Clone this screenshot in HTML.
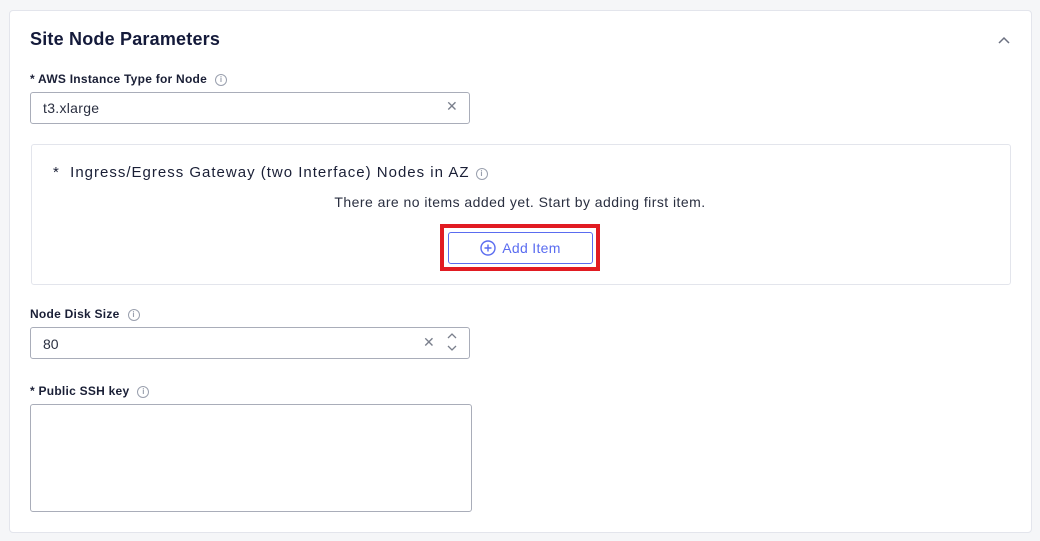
<!DOCTYPE html>
<html><head><style>
body{margin:0;width:1040px;height:541px;background:#f5f6f8;font-family:"Liberation Sans",sans-serif;position:relative;overflow:hidden}
.card{position:absolute;left:9px;top:10px;width:1021px;height:521px;background:#fff;border:1px solid #e3e5ec;border-radius:4px}
.a{position:absolute}
.lbl{font-size:12px;font-weight:bold;color:#1a1f36;letter-spacing:0.25px}
.inp{border:1px solid #a9adb9;border-radius:3px;background:#fff}
.info{display:inline-block;width:10px;height:10px;border:1px solid #9aa0ae;border-radius:50%;font-size:8px;line-height:10px;text-align:center;color:#9aa0ae;vertical-align:1px;margin-left:8px;font-weight:bold;letter-spacing:0}
</style></head><body>
<div class="card"></div>
<div class="a" style="left:30px;top:29px;font-size:18px;font-weight:bold;color:#141a3a;letter-spacing:0.2px">Site Node Parameters</div>
<svg class="a" style="left:997px;top:35px" width="14" height="10"><path d="M2 8L7 3L12 8" stroke="#6b7080" stroke-width="1.5" fill="none"/></svg>
<div class="a lbl" style="left:30px;top:72px">* AWS Instance Type for Node<span class="info">i</span></div>
<div class="a inp" style="left:30px;top:92px;width:438px;height:30px"></div>
<div class="a" style="left:43px;top:100px;font-size:14px;color:#2a2f40;letter-spacing:0.3px">t3.xlarge</div>
<div class="a" style="left:446px;top:98px;font-size:14px;color:#7a7f8c">✕</div>
<div class="a" style="left:31px;top:144px;width:978px;height:139px;border:1px solid #e3e5ec;border-radius:3px"></div>
<div class="a" style="left:53px;top:164px;font-size:15px;color:#1a1f36;letter-spacing:1px">* &nbsp;Ingress/Egress Gateway (two Interface) Nodes in AZ<span class="info" style="margin-left:6px">i</span></div>
<div class="a" style="left:0;width:1040px;text-align:center;top:194px;font-size:14px;color:#2a2f40;letter-spacing:0.45px">There are no items added yet. Start by adding first item.</div>
<div class="a" style="left:440px;top:224px;width:152px;height:39px;border:4px solid #e11b22"></div>
<div class="a" style="left:448px;top:232px;width:143px;height:30px;border:1px solid #5a6cf0;border-radius:3px;color:#5a6cf0;font-size:14px;line-height:30px;text-align:center;letter-spacing:0.3px"><svg width="16" height="16" style="vertical-align:-3px;margin-right:6px"><circle cx="8" cy="8" r="7" stroke="#5a6cf0" stroke-width="1.4" fill="none"/><path d="M8 4.5V11.5M4.5 8H11.5" stroke="#5a6cf0" stroke-width="1.4"/></svg>Add Item</div>
<div class="a lbl" style="left:30px;top:307px">Node Disk Size<span class="info">i</span></div>
<div class="a inp" style="left:30px;top:327px;width:438px;height:30px"></div>
<div class="a" style="left:43px;top:336px;font-size:14px;color:#2a2f40">80</div>
<div class="a" style="left:423px;top:334px;font-size:14px;color:#7a7f8c">✕</div>
<svg class="a" style="left:446px;top:331px" width="12" height="22"><path d="M2 7L6 3L10 7M2 15L6 19L10 15" stroke="#7a7f8c" stroke-width="1.3" fill="none"/></svg>
<div class="a lbl" style="left:30px;top:384px">* Public SSH key<span class="info">i</span></div>
<div class="a inp" style="left:30px;top:404px;width:440px;height:106px"></div>
</body></html>
